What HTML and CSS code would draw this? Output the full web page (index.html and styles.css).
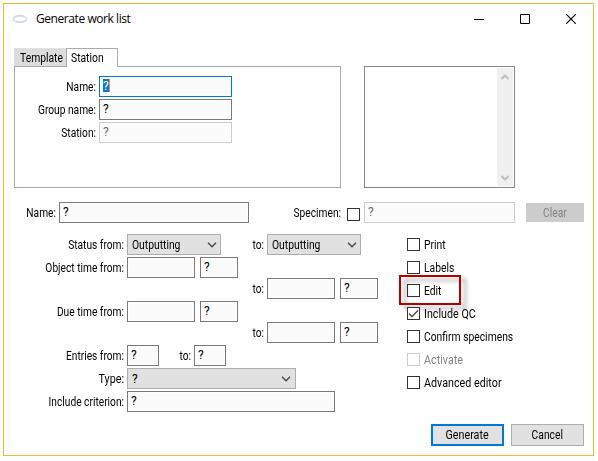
FILE: index.html
```html
<!DOCTYPE html>
<html lang="en">
<head>
<meta charset="utf-8">
<title>Generate work list</title>
<link rel="stylesheet" href="styles.css">
</head>
<body>
<main class="window">
  <header class="titlebar">
    <svg class="logo" width="16" height="10" viewBox="0 0 16 10" fill="none"><ellipse cx="8" cy="5" rx="6.6" ry="3.2" stroke="#dfe5e9" stroke-width="2.2"/><path d="M2 2.8Q7 .2 12 2.2M4 7.8Q10 9.6 14 6.8" stroke="#cfd8de" stroke-width="1"/></svg>
    <h1>Generate work list</h1>
    <div class="controls">
      <svg width="10" height="10"><path d="M0 5.5H10" stroke="#000"/></svg>
      <svg width="10" height="10"><path d="M.5.5H9.5V9.5H.5Z" stroke="#000" fill="none"/></svg>
      <svg width="10" height="10"><path d="M.2.2L9.8 9.8M9.8.2L.2 9.8" stroke="#000" stroke-width="1.1"/></svg>
    </div>
  </header>

  <section class="top">
    <div class="tabs-area">
      <nav class="tabs"><span class="tab"><span class="text">Template</span></span><span class="tab active"><span class="text">Station</span></span></nav>
      <div class="panel">
        <label>Name:</label><div class="field focus"><span class="sel">?</span></div>
        <label>Group name:</label><div class="field">?</div>
        <label>Station:</label><div class="field disabled">?</div>
      </div>
    </div>
    <div class="list">
      <div class="scroll">
        <svg width="8" height="6" viewBox="0 0 8 6"><path d="M.5 5L4 1.5L7.5 5" fill="none" stroke="#bfbfbf" stroke-width="2"/></svg>
        <svg width="8" height="6" viewBox="0 0 8 6"><path d="M.5 1L4 4.5L7.5 1" fill="none" stroke="#bfbfbf" stroke-width="2"/></svg>
      </div>
    </div>
  </section>

  <section class="name-row">
    <label>Name:</label><div class="field long">?</div>
    <label class="specimen">Specimen:</label><i class="box"></i><div class="field disabled spec">?</div>
    <button class="clear" disabled><span class="text">Clear</span></button>
  </section>

  <section class="details">
    <div class="form">
      <div class="row"><label>Status from:</label>
        <div class="select"><span class="text">Outputting</span><svg class="chev" width="10" height="6"><path d="M1 .8L5 4.8L9 .8"/></svg></div>
        <label class="to">to:</label>
        <div class="select"><span class="text">Outputting</span><svg class="chev" width="10" height="6"><path d="M1 .8L5 4.8L9 .8"/></svg></div></div>
      <div class="row"><label>Object time from:</label><div class="field date"></div><div class="field time">?</div></div>
      <div class="row tight"><label class="to indent">to:</label><div class="field date"></div><div class="field time">?</div></div>
      <div class="row"><label>Due time from:</label><div class="field date"></div><div class="field time">?</div></div>
      <div class="row tight"><label class="to indent">to:</label><div class="field date"></div><div class="field time">?</div></div>
      <div class="row"><label>Entries from:</label><div class="field num">?</div><label class="to short">to:</label><div class="field num">?</div></div>
      <div class="row"><label class="loose">Type:</label><div class="select type">?<svg class="chev" width="10" height="6"><path d="M1 .8L5 4.8L9 .8"/></svg></div></div>
      <div class="row"><label>Include criterion:</label><div class="field criterion">?</div></div>
    </div>
    <div class="options">
      <div class="option"><i class="box"></i><span class="text">Print</span></div>
      <div class="option"><i class="box"></i><span class="text">Labels</span></div>
      <div class="option marked"><i class="box"></i><span class="text">Edit</span></div>
      <div class="option"><i class="box"><svg width="11" height="11"><path d="M1 5.5L4 8.5L10 2.5" fill="none" stroke="#444" stroke-width="1.3"/></svg></i><span class="text loose">Include QC</span></div>
      <div class="option"><i class="box"></i><span class="text">Confirm specimens</span></div>
      <div class="option off"><i class="box"></i><span class="text loose">Activate</span></div>
      <div class="option"><i class="box"></i><span class="text loose">Advanced editor</span></div>
    </div>
  </section>

  <footer class="actions"><button class="primary"><span class="text loose">Generate</span></button><button><span class="text">Cancel</span></button></footer>
</main>
</body>
</html>
```

FILE: styles.css
```css
*, *::after { box-sizing: border-box; }
body { margin: 0; padding: 3px; background: #fff; color: #000; font: 12px/14px Roboto, "Liberation Sans", sans-serif; }
.window { width: 591px; height: 453px; border: 1px solid #f5b82e; background: #fff; }
svg { display: block; flex: none; }

/* Condensed interface lettering */
label { transform: scaleX(.85); transform-origin: 100% 50%; }
.text { display: inline-block; transform: scaleX(.86); transform-origin: 0 50%; }
.loose { transform: scaleX(.895); }
button .text { transform-origin: 50% 50%; }

.titlebar { display: flex; align-items: center; height: 29px; padding: 1px 17px 0 8px; }
h1 { margin: 0 0 0 8px; font: 12px/16px "Open Sans", "Noto Sans", sans-serif; letter-spacing: -.43px; }
.controls { display: flex; gap: 36px; margin-left: auto; }

.top { display: flex; height: 140px; margin-left: 10px; padding-top: 15px; }
.tabs-area { width: 327px; }
.tabs { display: flex; height: 18px; }
.tab { width: 52px; height: 18px; padding: 2px 0 0 6px; background: #dcdcdc; border-top: 1px solid #dce4e6; white-space: nowrap; }
.tab.active { position: relative; height: 19px; padding-left: 4px; background: #fff; border: 1px solid #aaa; border-bottom: 0; }
.panel { display: grid; grid-template-columns: 81px 133px; column-gap: 3px; row-gap: 2px; align-content: start; height: 122px; padding-top: 9px; border: 1px solid #aaa; }
label { text-align: right; line-height: 14px; padding-top: 4px; white-space: nowrap; }
.field { flex: none; height: 21px; padding: 2px 3px; border: 1px solid #7a7a7a; background: #fbfbfb; box-shadow: inset 0 0 0 1px #fff; }
.field.focus { border-color: #0078d7; }
.field.disabled { border-color: #ccc; color: #6d6d6d; }
.sel { display: inline-block; width: 7px; height: 13px; line-height: 14px; background: #0078d7; color: #fff; border-right: 1px solid #ff8728; }
.list { display: flex; justify-content: flex-end; width: 151px; height: 122px; margin: 18px 0 0 23px; padding: 1px; border: 1px solid #828790; }
.scroll { display: flex; flex-direction: column; justify-content: space-between; align-items: center; width: 16px; padding: 6px 0 5px; background: #f0f0f0; }

.name-row { display: flex; height: 61px; padding-top: 29px; }
.name-row > label { width: 52px; margin-right: 3px; }
.field.long { width: 190px; }
.name-row > .specimen { width: 92px; margin-right: 6px; }
.box { display: block; flex: none; width: 13px; height: 13px; border: 1px solid #333; background: #fff; }
.name-row .box { margin: 6px 4px 0 0; }
.field.spec { width: 151px; }
button { width: 73px; height: 22px; padding: 0; border: 1px solid #adadad; background: #e1e1e1; color: #000; font: inherit; }
.clear { width: 58px; height: 19px; margin: 1px 0 0 11px; border: 0; background: #ccc; color: #838383; }

.details { display: flex; height: 186px; }
.form { width: 403px; display: flex; flex-direction: column; gap: 2px; }
.row { display: flex; height: 21px; }
.row.tight { margin-top: -2px; }
.row > label:first-child { width: 120px; margin-right: 3px; }
.row > label.to.indent { width: 260px; }
.to { width: 43px; margin-right: 3px; }
.to.short { width: 32px; }
.select { display: flex; justify-content: space-between; align-items: center; width: 94px; height: 21px; padding: 0 3px 0 4px; border: 1px solid #adadad; background: #e1e1e1; }
.select.type { width: 169px; padding-right: 4px; }
.chev path { fill: none; stroke: #444; stroke-width: 1.3; }
.date { width: 68px; margin-right: 5px; }
.time { width: 38px; }
.num { width: 32px; }
.criterion { width: 208px; }

.options { display: flex; flex-direction: column; gap: 10px; padding-top: 4px; }
.option { position: relative; display: flex; gap: 4px; height: 13px; line-height: 14px; white-space: nowrap; }
.option.off { color: #838383; }
.option.off .box { border-color: #ccc; }
.marked::after { content: ""; position: absolute; left: -8px; top: -9px; width: 62px; height: 30px; border: 2px solid #b90000; filter: drop-shadow(5px 4px 2px rgba(0,0,0,.35)); }

.actions { display: flex; justify-content: flex-end; gap: 7px; padding: 4px 9px 0 0; }
.primary { border: 2px solid #0078d7; }
```
